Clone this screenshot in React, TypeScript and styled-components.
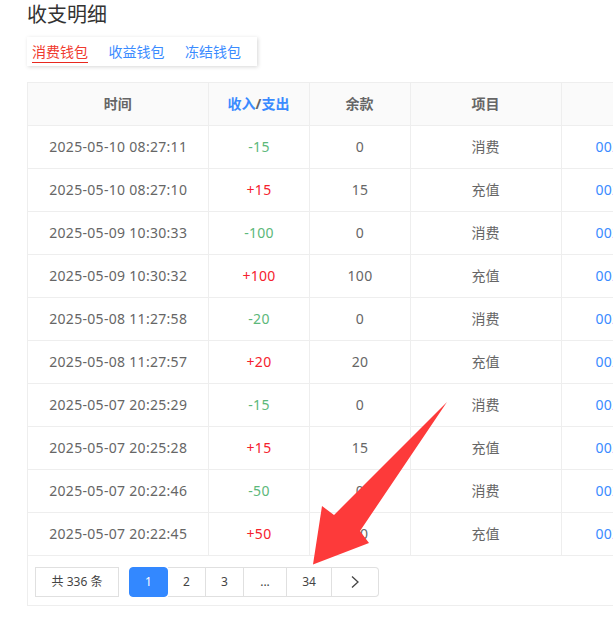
import * as React from 'react';
import styled, { createGlobalStyle } from 'styled-components';

const BORDER = '#eeeeee';
const BLUE = '#3a8bff';
const FONT = '"Noto Sans", "Noto Sans CJK SC", sans-serif';

const GlobalStyle = createGlobalStyle`
  html, body {
    margin: 0;
    padding: 0;
    height: 641px;
    overflow: hidden;
    background: #fff;
    font-family: ${FONT};
  }
`;

const Page = styled.div`
  position: relative;
  width: 613px;
  height: 641px;
  overflow: hidden;
  padding-left: 27px;
  box-sizing: border-box;
`;

const Title = styled.h1`
  margin: 0;
  height: 37px;
  padding-top: 1px;
  box-sizing: border-box;
  font-size: 20px;
  line-height: 27px;
  font-weight: 400;
  color: #333;
`;

const Tabs = styled.div`
  display: flex;
  gap: 20.5px;
  width: 230px;
  height: 29px;
  padding: 0 5px;
  box-sizing: border-box;
  box-shadow: 1px 1px 4px rgba(0, 0, 0, 0.16);
`;

const Tab = styled.a<{ $active?: boolean }>`
  height: 25px;
  line-height: 30px;
  font-size: 14px;
  color: ${(p) => (p.$active ? '#f03a2e' : BLUE)};
  border-bottom: ${(p) => (p.$active ? '1px solid #e8281e' : 'none')};
`;

const Panel = styled.div`
  margin-top: 16px;
  width: 760px;
  height: 524px;
  border: 1px solid ${BORDER};
  box-sizing: border-box;
`;

const Table = styled.table`
  border-collapse: collapse;
  table-layout: fixed;
  width: 751px;
`;

const Head = styled.th<{ $w: number }>`
  width: ${(p) => p.$w}px;
  height: 42px;
  padding: 0 0 2px;
  box-sizing: border-box;
  background: #fafafa;
  border-right: 1px solid ${BORDER};
  border-bottom: 1px solid ${BORDER};
  font-size: 14px;
  font-weight: 700;
  color: #666;
`;

const HeadLink = styled.span`
  color: ${BLUE};
`;

const Row = styled.tr`
  height: 43px;
`;

const Cell = styled.td<{ $color?: string; $spaced?: boolean }>`
  height: 42px;
  box-sizing: border-box;
  padding: 0 0 0 ${(p) => (p.$spaced ? 1 : 0)}px;
  line-height: 20px;
  text-align: center;
  border-right: 1px solid ${BORDER};
  border-bottom: 1px solid ${BORDER};
  font-size: 14px;
  letter-spacing: ${(p) => (p.$spaced ? '0.3px' : '0')};
  color: ${(p) => p.$color || '#666'};
`;

const OrderCell = styled.td`
  height: 42px;
  box-sizing: border-box;
  padding: 0 0 0 34px;
  line-height: 20px;
  white-space: nowrap;
  overflow: hidden;
  border-bottom: 1px solid ${BORDER};
  font-size: 14px;
  letter-spacing: 0.26px;
  color: ${BLUE};
`;

const Footer = styled.div`
  display: flex;
  padding: 11px 0 0 7px;
`;

const Total = styled.div`
  width: 84px;
  height: 30px;
  margin-right: 10px;
  border: 1px solid #e0e0e0;
  box-sizing: border-box;
  font-size: 12px;
  line-height: 28px;
  text-align: center;
  color: #444;
`;

const Pager = styled.div`
  display: flex;
  height: 30px;
`;

const PageButton = styled.button<{ $w: number; $active?: boolean }>`
  width: ${(p) => p.$w}px;
  height: 30px;
  padding: 0;
  display: flex;
  align-items: center;
  justify-content: center;
  box-sizing: border-box;
  font-family: ${FONT};
  font-size: 12px;
  background: ${(p) => (p.$active ? '#3388ff' : '#fff')};
  color: ${(p) => (p.$active ? '#fff' : '#444')};
  border: 1px solid ${(p) => (p.$active ? '#3388ff' : '#e0e0e0')};
  border-left-width: ${(p) => (p.$active ? 1 : 0)}px;

  &:first-child {
    border-radius: 4px;
  }
  &:last-child {
    border-radius: 0 4px 4px 0;
  }
`;

const Arrow = styled.svg`
  position: absolute;
  left: 0;
  top: 0;
  pointer-events: none;
`;

const rows = [
  ['2025-05-10 08:27:11', '-15', '0', '消费'],
  ['2025-05-10 08:27:10', '+15', '15', '充值'],
  ['2025-05-09 10:30:33', '-100', '0', '消费'],
  ['2025-05-09 10:30:32', '+100', '100', '充值'],
  ['2025-05-08 11:27:58', '-20', '0', '消费'],
  ['2025-05-08 11:27:57', '+20', '20', '充值'],
  ['2025-05-07 20:25:29', '-15', '0', '消费'],
  ['2025-05-07 20:25:28', '+15', '15', '充值'],
  ['2025-05-07 20:22:46', '-50', '0', '消费'],
  ['2025-05-07 20:22:45', '+50', '50', '充值'],
];

const App: React.FC = () => {
  return (
    <Page>
      <GlobalStyle />
      <Title>收支明细</Title>
      <Tabs>
        <Tab $active>消费钱包</Tab>
        <Tab>收益钱包</Tab>
        <Tab>冻结钱包</Tab>
      </Tabs>
      <Panel>
        <Table>
          <thead>
            <tr>
              <Head $w={180}>时间</Head>
              <Head $w={101}>
                <HeadLink>收入</HeadLink>/<HeadLink>支出</HeadLink>
              </Head>
              <Head $w={101}>余款</Head>
              <Head $w={151}>项目</Head>
              <Head $w={218} />
            </tr>
          </thead>
          <tbody>
            {rows.map((r) => (
              <Row key={r[0]}>
                <Cell $spaced>{r[0]}</Cell>
                <Cell $spaced $color={r[1][0] === '-' ? '#5cb87a' : '#f5222d'}>{r[1]}</Cell>
                <Cell $spaced>{r[2]}</Cell>
                <Cell>{r[3]}</Cell>
                <OrderCell>0020250510082711</OrderCell>
              </Row>
            ))}
          </tbody>
        </Table>
        <Footer>
          <Total>共 336 条</Total>
          <Pager>
            <PageButton $w={39} $active>1</PageButton>
            <PageButton $w={38}>2</PageButton>
            <PageButton $w={38}>3</PageButton>
            <PageButton $w={43}>...</PageButton>
            <PageButton $w={45}>34</PageButton>
            <PageButton $w={47}>
              <svg width="10" height="14" viewBox="0 0 10 14" fill="none" stroke="#444" strokeWidth="1.3">
                <path d="M2 1.5 L8 7 L2 12.5" />
              </svg>
            </PageButton>
          </Pager>
        </Footer>
      </Panel>
      <Arrow width="613" height="641" viewBox="0 0 613 641">
        <polygon points="447,402 360,531 369,543 313,564.5 322,506 334,515" fill="#fd3a3a" />
      </Arrow>
    </Page>
  );
};

export default App;
